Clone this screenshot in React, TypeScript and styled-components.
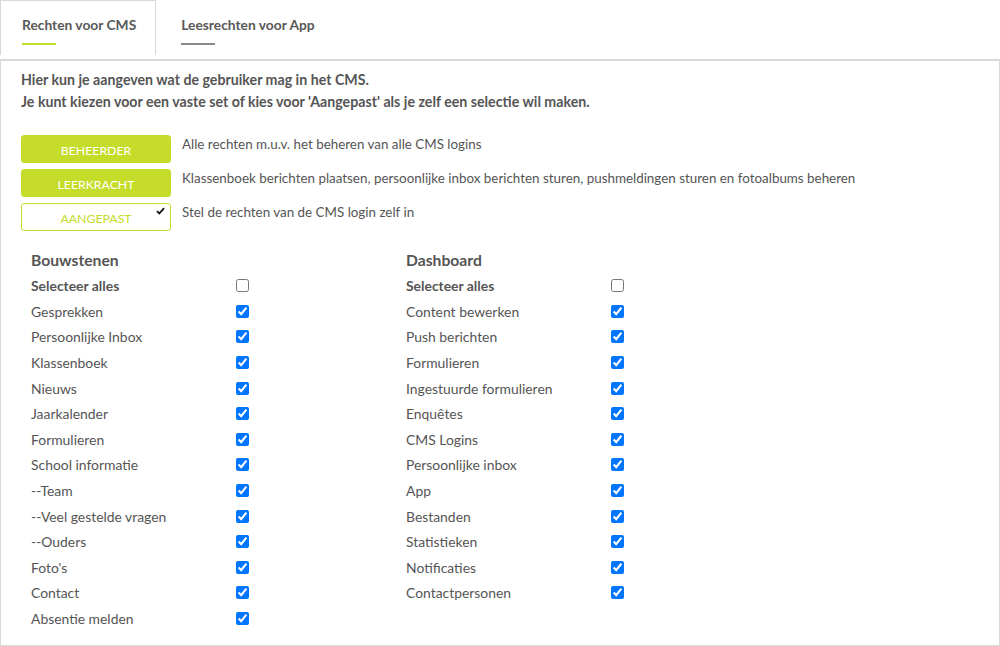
import * as React from "react";
import styled, { createGlobalStyle } from "styled-components";

const GlobalStyle = createGlobalStyle`
  html, body {
    margin: 0;
    padding: 0;
    background: #ffffff;
  }
  body {
    font-family: Lato, "Open Sans", sans-serif;
    color: #555555;
    font-size: 13px;
  }
`;

const LIME = "#c5dc2a";

const SPage = styled.div`
  width: 1000px;
  height: 646px;
  box-sizing: border-box;
  display: flex;
  flex-direction: column;
`;

const STabBar = styled.div`
  display: flex;
  height: 59px;
  align-items: flex-start;
`;

interface ITabProps {
  active?: boolean;
}

const STab = styled.div<ITabProps>`
  box-sizing: border-box;
  height: 55px;
  padding: 15px 19px 0 21px;
  margin-right: 3px;
  border: 1px solid ${({ active }) => (active ? "#d9d9d9" : "transparent")};
  border-bottom: none;
  font-weight: 700;
  font-size: 13.8px;
  color: #585858;
  display: flex;
  flex-direction: column;
  gap: 10px;
`;

const STabLine = styled.div<ITabProps>`
  width: 34px;
  height: 2px;
  background: ${({ active }) => (active ? LIME : "#8a8a8a")};
`;

const SPanel = styled.div`
  flex: 1;
  box-sizing: border-box;
  border: 1px solid #d9d9d9;
  border-top-width: 2px;
  padding: 8px 20px 0 20px;
`;

const SIntro = styled.p`
  margin: 0;
  font-weight: 700;
  font-size: 14.2px;
  line-height: 22px;
`;

const SPresets = styled.div`
  margin-top: 22px;
  display: flex;
  flex-direction: column;
  gap: 6px;
`;

const SPresetRow = styled.div`
  display: flex;
  align-items: center;
  gap: 11px;
`;

const SPresetButton = styled.div<ITabProps>`
  position: relative;
  box-sizing: border-box;
  flex: none;
  width: 150px;
  height: 28px;
  border-radius: 3px;
  border: 1px solid ${LIME};
  background: ${({ active }) => (active ? "#ffffff" : LIME)};
  color: ${({ active }) => (active ? LIME : "#ffffff")};
  font-size: 12.3px;
  text-transform: uppercase;
  display: flex;
  align-items: center;
  justify-content: center;
  padding-top: 2px;
`;

const SCheckMark = styled.svg`
  position: absolute;
  top: 3px;
  right: 5px;
`;

const SPresetText = styled.span`
  margin-top: -10px;
  font-size: 13.4px;
`;

const SColumns = styled.div`
  margin-top: 16px;
  padding-left: 10px;
  display: flex;
`;

const SColumn = styled.div`
  width: 375px;
  display: flex;
  flex-direction: column;
`;

const SHeading = styled.div`
  font-weight: 700;
  font-size: 15.7px;
  height: 26px;
  line-height: 26px;
`;

const SRow = styled.label<{ bold?: boolean }>`
  display: flex;
  align-items: center;
  height: 25.6px;
  font-weight: ${({ bold }) => (bold ? 700 : 400)};
  font-size: 13.9px;
`;

const SRowLabel = styled.span`
  width: 205px;
`;

const SCheckbox = styled.input`
  margin: 0;
  width: 13px;
  height: 13px;
`;

interface IGroup {
  title: string;
  items: string[];
}

const groups: IGroup[] = [
  {
    title: "Bouwstenen",
    items: [
      "Gesprekken",
      "Persoonlijke Inbox",
      "Klassenboek",
      "Nieuws",
      "Jaarkalender",
      "Formulieren",
      "School informatie",
      "--Team",
      "--Veel gestelde vragen",
      "--Ouders",
      "Foto's",
      "Contact",
      "Absentie melden",
    ],
  },
  {
    title: "Dashboard",
    items: [
      "Content bewerken",
      "Push berichten",
      "Formulieren",
      "Ingestuurde formulieren",
      "Enquêtes",
      "CMS Logins",
      "Persoonlijke inbox",
      "App",
      "Bestanden",
      "Statistieken",
      "Notificaties",
      "Contactpersonen",
    ],
  },
];

const presets = [
  { name: "Beheerder", text: "Alle rechten m.u.v. het beheren van alle CMS logins" },
  {
    name: "Leerkracht",
    text: "Klassenboek berichten plaatsen, persoonlijke inbox berichten sturen, pushmeldingen sturen en fotoalbums beheren",
  },
  { name: "Aangepast", text: "Stel de rechten van de CMS login zelf in", selected: true },
];

function Group({ title, items }: IGroup) {
  return (
    <SColumn>
      <SHeading>{title}</SHeading>
      <SRow bold>
        <SRowLabel>Selecteer alles</SRowLabel>
        <SCheckbox type="checkbox" readOnly />
      </SRow>
      {items.map((item) => (
        <SRow key={item}>
          <SRowLabel>{item}</SRowLabel>
          <SCheckbox type="checkbox" defaultChecked />
        </SRow>
      ))}
    </SColumn>
  );
}

export default function App() {
  return (
    <>
      <GlobalStyle />
      <SPage>
        <STabBar>
          <STab active>
            Rechten voor CMS
            <STabLine active />
          </STab>
          <STab>
            Leesrechten voor App
            <STabLine />
          </STab>
        </STabBar>
        <SPanel>
          <SIntro>
            Hier kun je aangeven wat de gebruiker mag in het CMS.
            <br />
            Je kunt kiezen voor een vaste set of kies voor 'Aangepast' als je zelf een selectie wil maken.
          </SIntro>
          <SPresets>
            {presets.map((p) => (
              <SPresetRow key={p.name}>
                <SPresetButton active={p.selected}>
                  {p.name}
                  {p.selected && (
                    <SCheckMark width="9" height="8" viewBox="0 0 9 8">
                      <path d="M1 4.2 L3.3 6.5 L8 1.2" fill="none" stroke="#111" strokeWidth="1.8" />
                    </SCheckMark>
                  )}
                </SPresetButton>
                <SPresetText>{p.text}</SPresetText>
              </SPresetRow>
            ))}
          </SPresets>
          <SColumns>
            {groups.map((g) => (
              <Group key={g.title} {...g} />
            ))}
          </SColumns>
        </SPanel>
      </SPage>
    </>
  );
}
